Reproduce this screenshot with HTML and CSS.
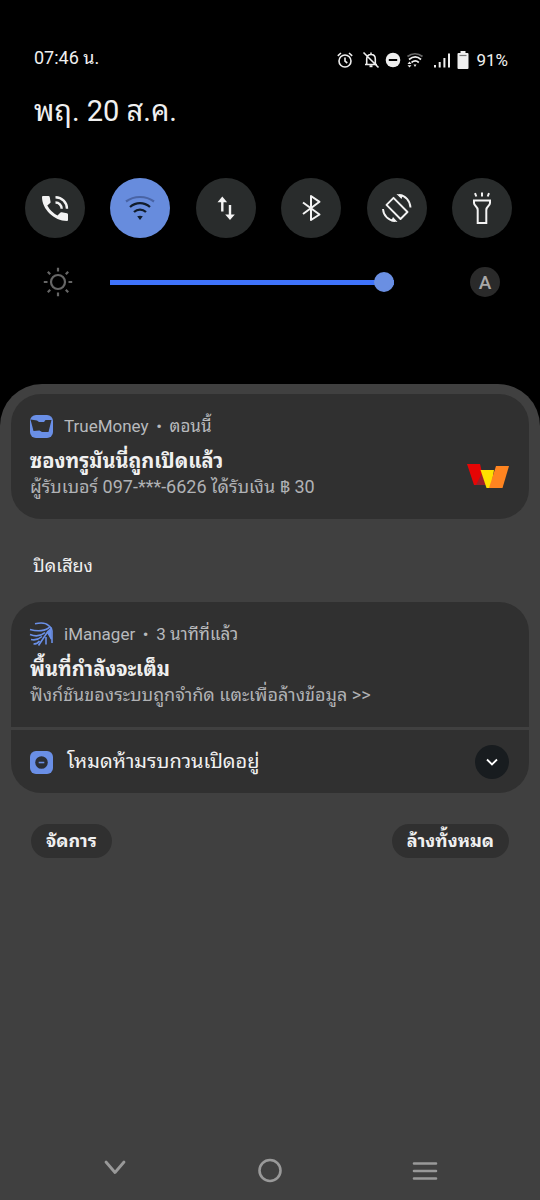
FILE: index.html
```html
<!DOCTYPE html>
<html lang="th">
<head>
<meta charset="utf-8">
<meta name="viewport" content="width=device-width, initial-scale=1">
<title>แผงการแจ้งเตือน</title>
<link rel="stylesheet" href="styles.css">
</head>
<body>
<div class="shade">
  <header class="top">
    <div class="status">
      <time class="clock">07:46 น.</time>
      <div class="indicators">
        <svg class="ind" width="18" height="18" viewBox="0 0 18 18" fill="none" stroke="#eee" stroke-width="1.6"><circle cx="9" cy="10" r="6"/><path d="M9 6.500V10.200L11.300 12M1.800 4.800L5 2M16.200 4.800L13 2"/></svg>
        <svg class="ind-bell" width="18" height="18" viewBox="0 0 18 18" fill="none" stroke="#eee" stroke-width="1.6"><path d="M3 13.500H15M4.700 13V8C4.700 5 6.500 3.500 9 3.500S13.300 5 13.300 8V13M9 1.500V3.500M1.500 1.500L16.500 16.500"/><path d="M7.500 15.200H10.500" stroke-width="2"/></svg>
        <svg class="ind-dnd" width="16" height="18" viewBox="0 0 16 18"><circle cx="8" cy="9" r="7.300" fill="#eee"/><path d="M3.800 9H12.200" stroke="#000" stroke-width="2"/></svg>
        <svg class="ind-wifi" width="18" height="18" viewBox="0 0 18 18" fill="none" stroke="#eee" stroke-width="1.700"><path d="M1.500 5.500C6 1.800 12 1.800 16.500 5.500" stroke="#666"/><path d="M3 8.500C7 5.300 11.500 5.300 15 8.500M5.500 11.500C8 9.500 10.500 9.500 12.800 11.500"/><path d="M9 16L7.500 13.500H10.500ZM3.500 10.500L1.500 13H5.500ZM3.500 16.500L1.500 14.200H5.500Z" fill="#eee" stroke="none"/></svg>
        <svg class="ind-signal" width="18" height="18" viewBox="0 0 18 18" stroke="#eee" stroke-width="2"><path d="M2 14V16.500M6.700 11V16.500M11.400 7V16.500M16 2.500V16.500"/></svg>
        <svg width="12" height="18" viewBox="0 0 12 18"><path d="M3.500 0H8.500V2H10.500Q11.500 2 11.500 3V17Q11.500 18 10.500 18H1.500Q.5 18 .5 17V3Q.5 2 1.500 2H3.500Z" fill="#eee"/><path d="M2.500 4.500H9.500" stroke="#777" stroke-width="1.200"/></svg>
        <span class="battery">91%</span>
      </div>
    </div>
    <h1 class="date">พฤ. 20 ส.ค.</h1>
    <div class="tiles">
      <button class="tile" aria-label="โทรผ่าน Wi-Fi"><svg width="32" height="32" viewBox="0 0 32 32"><path d="M4 4H9.500Q10.500 4 10.700 5L11.600 10Q11.700 10.600 11.200 11.100L8.300 13.500Q11.800 20 18.500 23.500L21.500 20.500Q22 20 22.700 20.200L28 21.300Q29 21.500 29 22.500V28Q29 29 28 29C15 29 3 17 3 5Q3 4 4 4Z" fill="#f3f3f3"/><path d="M16.500 5.200C23 5.200 28 10.500 28 16.800M16.500 10.500C20 10.500 22.700 13.300 22.700 16.800" fill="none" stroke="#f3f3f3" stroke-width="2.400"/></svg></button>
      <button class="tile tile-on" aria-label="Wi-Fi"><svg width="32" height="32" viewBox="0 0 32 32" fill="none"><path d="M2 9.500C10 3.500 22 3.500 30 9.500" stroke="#4964a5" stroke-width="2.200"/><path d="M6 15C12 9.800 20 9.800 26 15M10 20C13.500 16.800 18.500 16.800 22 20" stroke="#111c2b" stroke-width="2.300"/><path d="M16 28L13.200 24.300Q16 23 18.800 24.300Z" fill="#111c2b"/></svg></button>
      <button class="tile" aria-label="อินเทอร์เน็ตมือถือ"><svg width="32" height="32" viewBox="0 0 32 32" fill="none" stroke="#f3f3f3" stroke-width="2.400"><path d="M12.300 19.500V8M20 13V25"/><path d="M12.300 4.500L7.500 10.200H17.100ZM20 28L15.200 22.500H24.800Z" fill="#f3f3f3" stroke="none"/></svg></button>
      <button class="tile" aria-label="บลูทูธ"><svg width="32" height="32" viewBox="0 0 32 32" fill="none" stroke="#f3f3f3" stroke-width="2" stroke-linejoin="round"><path d="M8 10.500L24.500 22.500L16 28V4L24.500 9.800L8 22"/></svg></button>
      <button class="tile" aria-label="หมุนอัตโนมัติ"><svg width="32" height="32" viewBox="0 0 32 32" fill="none" stroke="#f3f3f3" stroke-width="1.900"><path d="M12.500 5.800L26.500 20L19.500 27L5.500 12.800Z" stroke-linejoin="round"/><path d="M18 3C24.500 3.500 29 8.500 29.500 15.500M2 17C2.500 24 7.500 28.500 14 29"/><path d="M15.500 2L22 2.700L20.500 7ZM16.500 30L10 29.300L12 25Z" fill="#f3f3f3" stroke="none"/></svg></button>
      <button class="tile" aria-label="ไฟฉาย"><svg width="32" height="32" viewBox="0 0 32 32" fill="none" stroke="#f3f3f3" stroke-width="2"><path d="M8 8.500H24V11C24 14 20.300 14 20.300 18V31H11.700V18C11.700 14 8 14 8 11ZM16 4.500V.5M10.300 4.500L9 1.200M21.700 4.500L23 1.200"/></svg></button>
    </div>
    <div class="brightness">
      <svg class="sun" width="30" height="30" viewBox="0 0 30 30" fill="none" stroke="#666" stroke-width="2.200"><circle cx="15" cy="15" r="7"/><path d="M15 .8V4.500M15 25.500V29.200M.8 15H4.500M25.500 15H29.200M4.800 4.800L7.200 7.200M22.800 22.800L25.200 25.200M4.800 25.200L7.200 22.800M22.800 7.200L25.200 4.800"/></svg>
      <input class="slider" type="range" min="0" max="100" value="100" aria-label="ความสว่าง">
      <button class="auto" aria-label="ความสว่างอัตโนมัติ">A</button>
    </div>
  </header>

  <main class="panel">
    <section class="group">
      <article class="card">
        <div class="card-text">
          <div class="card-head">
            <svg width="24" height="24" viewBox="0 0 24 24"><rect x="1" y="1" width="23" height="23" rx="6" fill="#6a8fe6"/><path d="M1.500 5.500L8 6.500L10 8H15L16.500 6H22.500L19.500 18H13L10.500 16.500L4.500 17Z" fill="#303030"/></svg>
            <span>TrueMoney</span><span class="dot">•</span><span>ตอนนี้</span>
          </div>
          <h2 class="card-title">ซองทรูมันนี่ถูกเปิดแล้ว</h2>
          <p class="card-body">ผู้รับเบอร์ 097-***-6626 ได้รับเงิน ฿ 30</p>
        </div>
        <svg class="brand" width="42" height="26" viewBox="0 0 42 26"><path d="M0 1H13L18 22H7Z" fill="#e60505"/><path d="M15 10L19 22H9Z" fill="#9b2029"/><path d="M13.500 7H27L24 25H19.500Z" fill="#ffe000"/><path d="M29 3H42L35.500 25H22Z" fill="#ff8420"/></svg>
      </article>
    </section>

    <h2 class="section-label">ปิดเสียง</h2>

    <section class="group">
      <article class="card">
        <div class="card-text">
          <div class="card-head">
            <svg width="24" height="24" viewBox="0 0 24 24" fill="none" stroke="#6a8fe6" stroke-width="1.600"><path d="M6 1.800C12 .5 17 1 19.500 3.500C22 5.500 23 6 23 9V21"/><path d="M1 7.500C8 9.500 17 9.500 21 4.500M1 12.500C6 14.500 12 14 16 10.500M2 17.500C6 18.500 9.500 17.500 13 14.500M4.500 22C7 22 9 21.500 10.500 19"/><path d="M9.500 23.500L18.500 10L22.500 17M17 15V22.500"/><path d="M18 9.500L22.500 5V18Z" fill="#6a8fe6" stroke="none"/></svg>
            <span>iManager</span><span class="dot">•</span><span>3 นาทีที่แล้ว</span>
          </div>
          <h2 class="card-title">พื้นที่กำลังจะเต็ม</h2>
          <p class="card-body">ฟังก์ชันของระบบถูกจำกัด แตะเพื่อล้างข้อมูล &gt;&gt;</p>
        </div>
      </article>
      <article class="card card-compact">
        <svg width="24" height="24" viewBox="0 0 24 24"><rect x="1" y="1" width="23" height="23" rx="6" fill="#6a8fe6"/><circle cx="12.500" cy="12.500" r="6.300" fill="#2a2e36"/><path d="M9.700 12.500H15.300" stroke="#6a8fe6" stroke-width="1.600"/></svg>
        <p class="compact-title">โหมดห้ามรบกวนเปิดอยู่</p>
        <button class="expand" aria-label="ขยาย"><svg width="14" height="10" viewBox="0 0 14 10" fill="none" stroke="#fff" stroke-width="1.800"><path d="M2 2.500L7 7.500L12 2.500"/></svg></button>
      </article>
    </section>

    <div class="actions">
      <button class="pill">จัดการ</button>
      <button class="pill">ล้างทั้งหมด</button>
    </div>

    <nav class="nav">
      <button class="nav-button" aria-label="กลับ"><svg width="28" height="28" viewBox="0 0 28 28" fill="none" stroke="#999" stroke-width="2.800" stroke-linecap="round" stroke-linejoin="round"><path d="M5 5L14 15.500L23 5"/></svg></button>
      <button class="nav-button" aria-label="หน้าแรก"><svg width="28" height="28" viewBox="0 0 28 28" fill="none" stroke="#999" stroke-width="2.600"><circle cx="14" cy="13.500" r="10.500"/></svg></button>
      <button class="nav-button" aria-label="แอปล่าสุด"><svg width="28" height="28" viewBox="0 0 28 28" stroke="#999" stroke-width="2.600" stroke-linecap="round"><path d="M3 6.500H25M3 14H25M3 21.500H25"/></svg></button>
    </nav>
  </main>
</div>
</body>
</html>
```
FILE: styles.css
```css
* {
  box-sizing: border-box;
}

body {
  margin: 0;
  background: #000;
  color: #f0f0f0;
  font-family: Roboto, "Noto Sans Thai Looped", "Noto Looped Thai", "Droid Sans Thai", Loma, Garuda, Waree, "Noto Sans Thai", "Noto Sans", sans-serif;
}

h1,
h2,
p {
  margin: 0;
  font-weight: 400;
}

button {
  border: 0;
  padding: 0;
  color: inherit;
  font: inherit;
  cursor: pointer;
}

svg {
  display: block;
  flex: none;
}

.shade {
  display: flex;
  flex-direction: column;
  min-height: 100vh;
}

.top {
  padding: 48px 24px 87px;
}

.status {
  display: flex;
  align-items: flex-start;
  justify-content: space-between;
  padding: 0 8px 0 10px;
  font-size: 17px;
  line-height: 24px;
}

.clock {
  font-size: 18px;
  line-height: 20px;
}

.indicators {
  display: flex;
  align-items: center;
}

.ind {
  margin-right: 8px;
}

.ind-bell,
.ind-dnd {
  margin-right: 5px;
}

.ind-wifi {
  margin-right: 9px;
}

.ind-signal {
  margin-right: 6px;
}

.battery {
  margin-left: 7px;
}

.date {
  padding: 0 10px;
  margin-top: 19px;
  font-size: 29px;
  line-height: 40px;
}

.tiles {
  display: flex;
  justify-content: space-between;
  margin-top: 47px;
  padding: 0 4px 0 1px;
}

.tile {
  display: grid;
  place-items: center;
  width: 60px;
  height: 60px;
  border-radius: 50%;
  background: #292c2c;
}

.tile-on {
  background: #678cdd;
}

.brightness {
  display: flex;
  align-items: center;
  margin-top: 29px;
  padding: 0 16px 0 19px;
}

.slider {
  flex: 1;
  min-width: 0;
  height: 21px;
  margin: 0 76px 0 37px;
  appearance: none;
  background: linear-gradient(#3f73fb, #3f73fb) center / 100% 5px no-repeat;
}

.slider::-webkit-slider-thumb {
  appearance: none;
  width: 20px;
  height: 20px;
  border-radius: 50%;
  background: #6a8fe2;
}

.auto {
  width: 30px;
  height: 30px;
  border-radius: 50%;
  background: #2a2a2a;
  color: #a8a8a8;
  font-size: 19px;
  font-weight: 500;
}

.panel {
  display: flex;
  flex: 1;
  flex-direction: column;
  padding: 10px 11px 15px;
  border-radius: 42px 42px 0 0;
  background: #404040;
}

.group {
  display: grid;
  gap: 3px;
  overflow: hidden;
  border-radius: 30px;
}

.card {
  display: flex;
  align-items: center;
  padding: 18px 20px 20px 19px;
  background: #303030;
}

.card-text {
  flex: 1;
  min-width: 0;
}

.card-head {
  display: flex;
  align-items: center;
  margin-left: -1px;
  color: #b8babd;
  font-size: 17px;
  line-height: 28px;
}

.card-head svg {
  margin-right: 11px;
}

.dot {
  width: 21px;
  text-align: center;
}

.card-title {
  margin-top: 8px;
  font-size: 20px;
  font-weight: 700;
  line-height: 26px;
}

.card-body {
  color: #b0b2b5;
  font-size: 18px;
  line-height: 25px;
}

.brand {
  margin-top: 40px;
}

.card-compact {
  padding: 14px 20px 14px 18px;
}

.compact-title {
  flex: 1;
  padding-left: 14px;
  font-size: 20px;
  line-height: 35px;
}

.expand {
  display: grid;
  place-items: center;
  width: 34px;
  height: 34px;
  border-radius: 50%;
  background: #181c1f;
}

.section-label {
  padding: 33px 22px 22px;
  font-size: 18px;
  line-height: 28px;
}

.actions {
  display: flex;
  justify-content: space-between;
  padding: 31px 20px;
}

.pill {
  padding: 0 15px;
  border-radius: 17px;
  background: #303030;
  font-size: 18px;
  font-weight: 700;
  line-height: 34px;
}

.nav {
  display: grid;
  grid-template-columns: repeat(3, 1fr);
  margin: auto 26px 0;
  justify-items: center;
}

.nav-button {
  background: none;
}
```
